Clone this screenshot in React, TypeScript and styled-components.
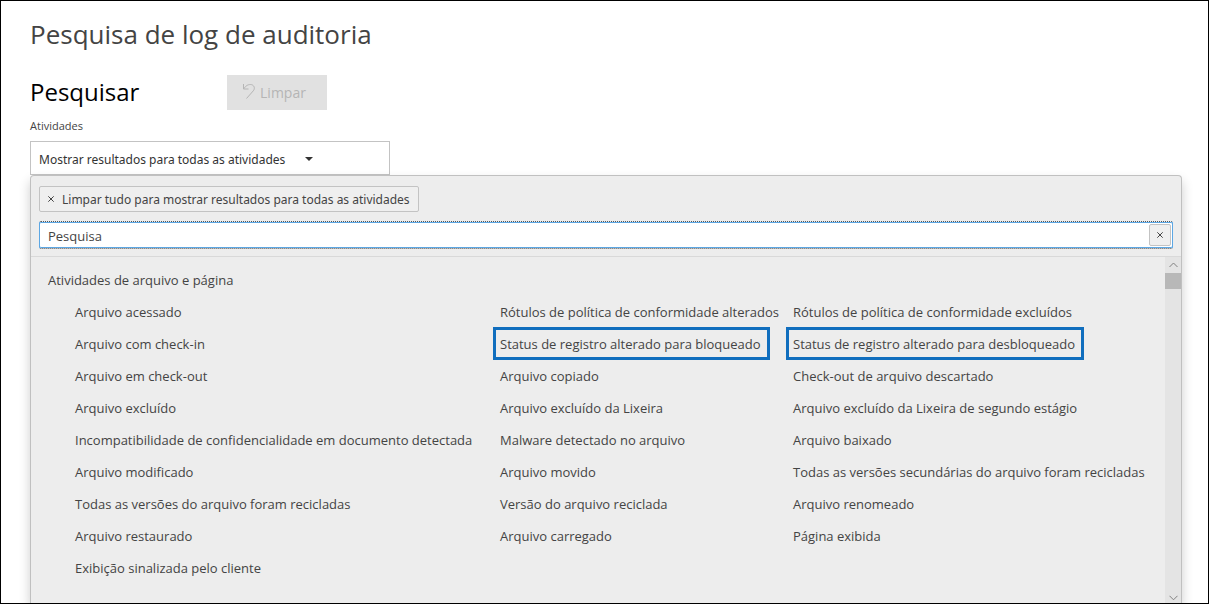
import React from "react";
import styled, { createGlobalStyle } from "styled-components";

const GlobalStyle = createGlobalStyle`
  *, *::before, *::after { box-sizing: border-box; }
  body { margin: 0; background: #fff; }
  body, button, input { font-family: "Open Sans", "Noto Sans", sans-serif; }
`;

const Frame = styled.main`
  display: flex;
  flex-direction: column;
  min-height: 100vh;
  padding: 14px 26px 0 29px;
  border: 1px solid #000;
  overflow: hidden;
  color: #444;
  font-size: 13px;
  line-height: 20px;
`;

const PageTitle = styled.h1`
  margin: 0;
  font-size: 26px;
  line-height: 38px;
  font-weight: 400;
`;

const SearchHeader = styled.header`
  display: flex;
  align-items: center;
  margin-top: 21px;
`;

const SectionTitle = styled.h2`
  width: 197px;
  margin: 0;
  color: #000;
  font-size: 24px;
  line-height: 36px;
  font-weight: 400;
`;

const ClearButton = styled.button`
  display: flex;
  align-items: center;
  justify-content: center;
  gap: 4px;
  width: 100px;
  height: 35px;
  padding: 0 6px 0 0;
  border: 0;
  background: #e1e1e1;
  color: #b5b5b5;
  font-size: 14px;
`;

const FieldLabel = styled.label`
  margin-top: 6px;
  font-size: 11px;
  line-height: 20px;
`;

const ActivityPicker = styled.button`
  display: flex;
  align-items: center;
  gap: 20px;
  width: 360px;
  height: 34px;
  margin-top: 5px;
  padding: 2px 8px 0;
  border: 1px solid #c3c3c3;
  background: #fff;
  color: #333;
  font-family: "Noto Sans", "Open Sans", sans-serif;
  font-size: 12px;
`;

const Panel = styled.section`
  display: flex;
  flex: 1;
  flex-direction: column;
  border: 1px solid #c0c0c0;
  border-bottom: 0;
  border-radius: 4px 4px 0 0;
  background: #ededed;
  box-shadow: 0 6px 12px rgba(0, 0, 0, 0.2);
`;

const PanelTools = styled.div`
  display: flex;
  flex-direction: column;
  align-items: flex-start;
  gap: 9px;
  padding: 10px 8px 7px;
  border-bottom: 1px solid #d9d9d9;
`;

const ResetButton = styled.button`
  display: flex;
  align-items: center;
  gap: 8px;
  height: 26px;
  padding: 0 8px;
  border: 1px solid #c3c3c3;
  border-radius: 2px;
  background: #efefef;
  color: #444;
  font-family: "Noto Sans", "Open Sans", sans-serif;
  font-size: 12px;
`;

const SearchBox = styled.div`
  display: flex;
  align-items: center;
  width: 100%;
  height: 28px;
  padding-right: 1px;
  border: 1px solid #5ca7e4;
  border-radius: 2px;
  border-top: 1px dotted #555;
  border-bottom: 1px dotted #555;
  background: #fff;
  background-clip: padding-box;
  box-shadow: inset 0 1px #5ca7e4, inset 0 -1px #5ca7e4;
`;

const SearchInput = styled.input`
  flex: 1;
  min-width: 0;
  height: 24px;
  padding: 2px 8px 0;
  border: 0;
  outline: 0;
  background: transparent;
  color: #444;
  font-size: 13px;
  &::placeholder { color: #444; opacity: 1; }
`;

const SearchClear = styled.button`
  display: flex;
  align-items: center;
  justify-content: center;
  width: 22px;
  height: 22px;
  padding: 0;
  border: 1px solid #c3c3c3;
  border-radius: 2px;
  background: #efefef;
  color: #444;
`;

const Results = styled.div`
  display: flex;
  flex: 1;
`;

const Group = styled.div`
  flex: 1;
  min-width: 0;
  padding: 8px 0 17px;
`;

const GroupTitle = styled.h3`
  margin: 0 0 0 17px;
  font-size: 13px;
  line-height: 30px;
  font-weight: 400;
`;

const ActivityGrid = styled.ul`
  display: grid;
  grid-template-columns: minmax(0, 425fr) minmax(0, 293fr) minmax(0, 379fr);
  grid-auto-rows: 32px;
  margin: 0;
  padding: 0 0 0 37px;
  list-style: none;
`;

const Activity = styled.button<{ $marked?: boolean }>`
  display: block;
  height: 33px;
  padding: 0 6px 0 4px;
  border: 3px solid ${(p) => (p.$marked ? "#106ebe" : "transparent")};
  background: transparent;
  color: #444;
  font-size: 13px;
  line-height: 20px;
  white-space: nowrap;
`;

const ScrollTrack = styled.div`
  display: flex;
  flex-direction: column;
  align-items: center;
  width: 16px;
  padding: 5px 0 2px;
  background: #e4e4e4;
`;

const ScrollThumb = styled.div`
  width: 16px;
  height: 16px;
  margin: 5px 0 auto;
  background: #b8b8b8;
`;

const UndoIcon = () => (
  <svg width="14" height="18" viewBox="0 0 14 18" fill="none" stroke="currentColor" aria-hidden="true">
    <path d="M1.500 1v5h5M1.500 6C4 2.500 6 1.500 8.300 1.500c3.800 0 5.200 3.800 3 6.300L4.500 15.500" />
  </svg>
);

const CrossIcon = () => (
  <svg width="6" height="6" viewBox="0 0 6 6" stroke="currentColor" aria-hidden="true">
    <path d="M.3 .3l5.400 5.400M5.700 .3L.3 5.700" />
  </svg>
);

const CaretIcon = () => (
  <svg width="8" height="4" viewBox="0 0 8 4" fill="currentColor" aria-hidden="true">
    <path d="M0 0h8L4 4z" />
  </svg>
);

const ScrollArrow = ({ down = false }: { down?: boolean }) => (
  <svg width="9" height="6" viewBox="0 0 9 6" fill="none" stroke="#808080" aria-hidden="true">
    <path d={down ? "M.5 .8l4 4 4-4" : "M.5 5l4-4 4 4"} />
  </svg>
);

const marked = new Set([
  "Status de registro alterado para bloqueado",
  "Status de registro alterado para desbloqueado",
]);

const activities = [
  "Arquivo acessado",
  "Rótulos de política de conformidade alterados",
  "Rótulos de política de conformidade excluídos",
  "Arquivo com check-in",
  "Status de registro alterado para bloqueado",
  "Status de registro alterado para desbloqueado",
  "Arquivo em check-out",
  "Arquivo copiado",
  "Check-out de arquivo descartado",
  "Arquivo excluído",
  "Arquivo excluído da Lixeira",
  "Arquivo excluído da Lixeira de segundo estágio",
  "Incompatibilidade de confidencialidade em documento detectada",
  "Malware detectado no arquivo",
  "Arquivo baixado",
  "Arquivo modificado",
  "Arquivo movido",
  "Todas as versões secundárias do arquivo foram recicladas",
  "Todas as versões do arquivo foram recicladas",
  "Versão do arquivo reciclada",
  "Arquivo renomeado",
  "Arquivo restaurado",
  "Arquivo carregado",
  "Página exibida",
  "Exibição sinalizada pelo cliente",
];

export default function App() {
  return (
    <>
      <GlobalStyle />
      <Frame>
        <PageTitle>Pesquisa de log de auditoria</PageTitle>
        <SearchHeader>
          <SectionTitle>Pesquisar</SectionTitle>
          <ClearButton type="button" disabled>
            <UndoIcon />
            Limpar
          </ClearButton>
        </SearchHeader>
        <FieldLabel htmlFor="activities">Atividades</FieldLabel>
        <ActivityPicker id="activities" type="button" aria-expanded="true">
          Mostrar resultados para todas as atividades
          <CaretIcon />
        </ActivityPicker>
        <Panel>
          <PanelTools>
            <ResetButton type="button">
              <CrossIcon />
              Limpar tudo para mostrar resultados para todas as atividades
            </ResetButton>
            <SearchBox>
              <SearchInput type="text" placeholder="Pesquisa" aria-label="Pesquisa" />
              <SearchClear type="button" aria-label="Limpar pesquisa">
                <CrossIcon />
              </SearchClear>
            </SearchBox>
          </PanelTools>
          <Results>
            <Group>
              <GroupTitle>Atividades de arquivo e página</GroupTitle>
              <ActivityGrid>
                {activities.map((name) => (
                  <li key={name}>
                    <Activity type="button" $marked={marked.has(name)}>
                      {name}
                    </Activity>
                  </li>
                ))}
              </ActivityGrid>
            </Group>
            <ScrollTrack>
              <ScrollArrow />
              <ScrollThumb />
              <ScrollArrow down />
            </ScrollTrack>
          </Results>
        </Panel>
      </Frame>
    </>
  );
}
